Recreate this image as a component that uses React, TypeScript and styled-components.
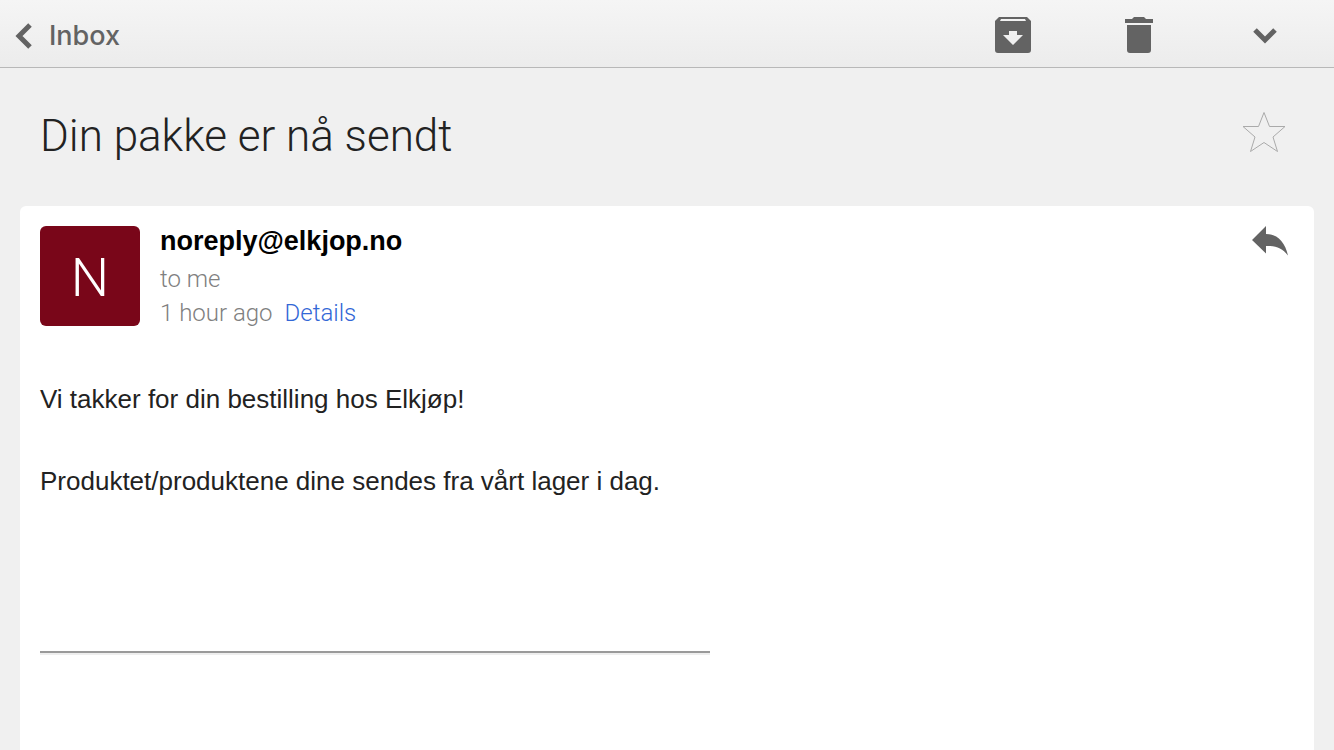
import React from "react";
import styled, { createGlobalStyle } from "styled-components";

const GlobalStyle = createGlobalStyle`
  * { box-sizing: border-box; }
  body {
    margin: 0;
    background: #f0f0f0;
    color: #222;
    font-family: "Liberation Sans", Arial, sans-serif;
  }
`;

const light = `font-family: Roboto, "Liberation Sans", sans-serif; font-weight: 300;`;

const Page = styled.div`
  display: flex;
  flex-direction: column;
  min-height: 100vh;
`;

const Toolbar = styled.header`
  display: flex;
  align-items: center;
  justify-content: space-between;
  height: 68px;
  padding: 0 39px 0 12px;
  border-bottom: 1px solid #b8b8b8;
  background: linear-gradient(#f5f5f5, #ececec);
`;

const BackLink = styled.a`
  display: flex;
  align-items: center;
  gap: 13px;
  padding-top: 4px;
  color: #636363;
  font-family: Inter, "Liberation Sans", sans-serif;
  font-size: 27px;
  line-height: 32px;
  font-weight: 500;
  text-decoration: none;
`;

const Actions = styled.nav`
  display: flex;
  gap: 66px;
  padding-top: 3px;
`;

const IconButton = styled.button`
  display: block;
  flex: none;
  padding: 0;
  border: 0;
  background: none;
  color: #636363;
  cursor: pointer;

  svg { display: block; }
`;

const Subject = styled.div`
  display: flex;
  align-items: flex-start;
  justify-content: space-between;
  height: 138px;
  padding: 40px 48px 0 40px;
`;

const Title = styled.h1`
  margin: 0;
  ${light}
  font-size: 44px;
  line-height: 56px;
`;

const Card = styled.main`
  flex: 1;
  margin: 0 20px;
  padding: 20px 20px 0;
  border-radius: 6px 6px 0 0;
  background: #fff;
`;

const Sender = styled.div`
  display: flex;
  align-items: flex-start;
  gap: 20px;
  padding-right: 4px;
`;

const Avatar = styled.div`
  display: flex;
  align-items: center;
  justify-content: center;
  width: 100px;
  height: 100px;
  padding-top: 4px;
  border-radius: 6px;
  background: #790619;
  color: #fff;
  ${light}
  font-size: 54px;
  line-height: 64px;
`;

const SenderInfo = styled.div`
  flex: 1;
  color: #808080;
  ${light}
  font-size: 24px;
  line-height: 34px;
`;

const Address = styled.h2`
  margin: 0 0 5px;
  color: #000;
  font-family: "Liberation Sans", Arial, sans-serif;
  font-size: 27px;
  line-height: 31px;
  font-weight: 700;
`;

const Line = styled.div``;

const DetailsLink = styled.a`
  margin-left: 12px;
  color: #3367d6;
  text-decoration: none;
`;

const Body = styled.div`
  padding-top: 49px;
  font-size: 26px;
  line-height: 41px;

  p { margin: 0 0 41px; }
`;

const Rule = styled.hr`
  max-width: 670px;
  height: 4px;
  margin: 149px 0 0;
  border: solid;
  border-width: 2px 0;
  border-color: #9a9a9a transparent #eee;
`;

export default function App() {
  return (
    <Page>
      <GlobalStyle />
      <Toolbar>
        <BackLink href="#inbox">
          <svg width="24" height="28" viewBox="0 0 24 28" fill="none" stroke="currentColor" strokeWidth="5" aria-hidden="true">
            <path d="M18 3 7 14 18 25" />
          </svg>
          Inbox
        </BackLink>
        <Actions>
          <IconButton aria-label="Archive">
            <svg width="60" height="40" viewBox="0 0 60 40" fill="currentColor">
              <path fillRule="evenodd" d="M16 2h28l4 4v29a3 3 0 0 1-3 3H15a3 3 0 0 1-3-3V6zM18 4l-1 2h26l-1-2zM26 16h8v4h6L30 30 20 20h6z" />
            </svg>
          </IconButton>
          <IconButton aria-label="Delete">
            <svg width="60" height="40" viewBox="0 0 60 40" fill="currentColor">
              <path d="M16 4h7l2-2h10l2 2h7v4H16zM18 10h24v25a3 3 0 0 1-3 3H21a3 3 0 0 1-3-3z" />
            </svg>
          </IconButton>
          <IconButton aria-label="More actions">
            <svg width="60" height="40" viewBox="0 0 60 40" fill="none" stroke="currentColor" strokeWidth="5">
              <path d="M20 15 30 25 40 15" />
            </svg>
          </IconButton>
        </Actions>
      </Toolbar>
      <Subject>
        <Title>Din pakke er nå sendt</Title>
        <IconButton aria-label="Star">
          <svg width="44" height="44" viewBox="0 0 44 44" fill="none" stroke="#aaa" strokeWidth="1">
            <path d="M22 4.5l5.500 14H43L31 29l4.500 14.500L22 34.500 8.500 43.500 13 29 1 18.500h15.500z" />
          </svg>
        </IconButton>
      </Subject>
      <Card>
        <Sender>
          <Avatar>N</Avatar>
          <SenderInfo>
            <Address>noreply@elkjop.no</Address>
            <Line>to me</Line>
            <Line>
              1 hour ago<DetailsLink href="#details">Details</DetailsLink>
            </Line>
          </SenderInfo>
          <IconButton aria-label="Reply">
            <svg width="40" height="30" viewBox="0 0 40 30" fill="currentColor">
              <path d="M16 0v8c11 0 19 8 22 21.500C32 22 26 19.500 16 20v7.500L2 14z" />
            </svg>
          </IconButton>
        </Sender>
        <Body>
          <p>Vi takker for din bestilling hos Elkjøp!</p>
          <p>Produktet/produktene dine sendes fra vårt lager i dag.</p>
        </Body>
        <Rule />
      </Card>
    </Page>
  );
}
